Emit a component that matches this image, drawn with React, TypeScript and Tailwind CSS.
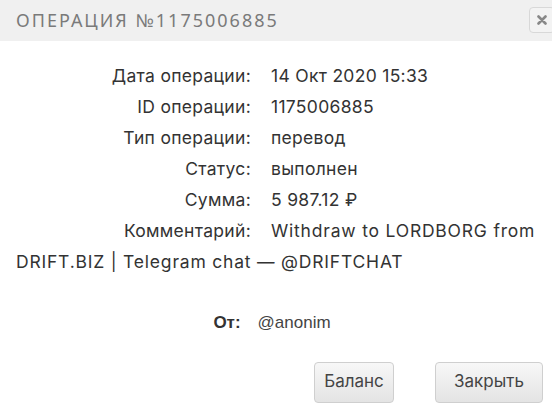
import React from "react";

const rows: [string, string][] = [
  ["Дата операции:", "14 Окт 2020 15:33"],
  ["ID операции:", "1175006885"],
  ["Тип операции:", "перевод"],
  ["Статус:", "выполнен"],
  ["Сумма:", "5 987.12 ₽"],
];

export default function App() {
  return (
    <div className="w-[552px] h-[413px] bg-white overflow-hidden text-[#333]" style={{ fontFamily: "Inter, sans-serif" }}>
      <div className="h-[41px] bg-[#f0f0f0] flex items-center justify-between pl-[16px]">
        <div className="text-[18px] tracking-[2px] text-[#7a7a7a] uppercase" style={{ fontFamily: "'Noto Sans', sans-serif" }}>
          Операция №1175006885
        </div>
        <div className="w-[26px] h-[26px] mr-[-3px] mt-[-2px] border border-[#d8d8d8] rounded-[4px] bg-[#f3f3f3] flex items-center justify-center">
          <svg width="10" height="10" viewBox="0 0 10 10">
            <path d="M1.5 1.5 L8.5 8.5 M8.5 1.5 L1.5 8.5" stroke="#888" strokeWidth="2.6" strokeLinecap="round" />
          </svg>
        </div>
      </div>
      <div className="px-[16px] pt-[19px] text-[17.5px] tracking-[0.3px] leading-[31px]">
        {rows.map(([l, v]) => (
          <div key={l}>
            <span className="inline-block w-[235px] text-right mr-[20px]">{l}</span>
            <span>{v}</span>
          </div>
        ))}
        <div>
          <span className="inline-block w-[235px] text-right mr-[20px]">Комментарий:</span>
          <span className="tracking-[0.8px]">Withdraw to LORDBORG from DRIFT.BIZ | Telegram chat — @DRIFTCHAT</span>
        </div>
      </div>
      <div className="flex justify-center mt-[33px] text-[17px] pr-[8px]" style={{ fontFamily: "'Liberation Sans', Arial, sans-serif" }}>
        <span className="font-semibold text-[#333] mr-[17px]">От:</span>
        <span className="text-[#444]">@anonim</span>
      </div>
      <div className="flex justify-end gap-[41px] pr-[9px] mt-[26px]">
        <button className="w-[80px] h-[41px] rounded-[4px] border border-[#cfcfcf] bg-gradient-to-b from-[#f7f7f7] to-[#e4e4e4] text-[17px] text-[#444]">
          Баланс
        </button>
        <button className="w-[108px] h-[41px] rounded-[4px] border border-[#cfcfcf] bg-gradient-to-b from-[#f7f7f7] to-[#e4e4e4] text-[17px] text-[#444]">
          Закрыть
        </button>
      </div>
    </div>
  );
}
